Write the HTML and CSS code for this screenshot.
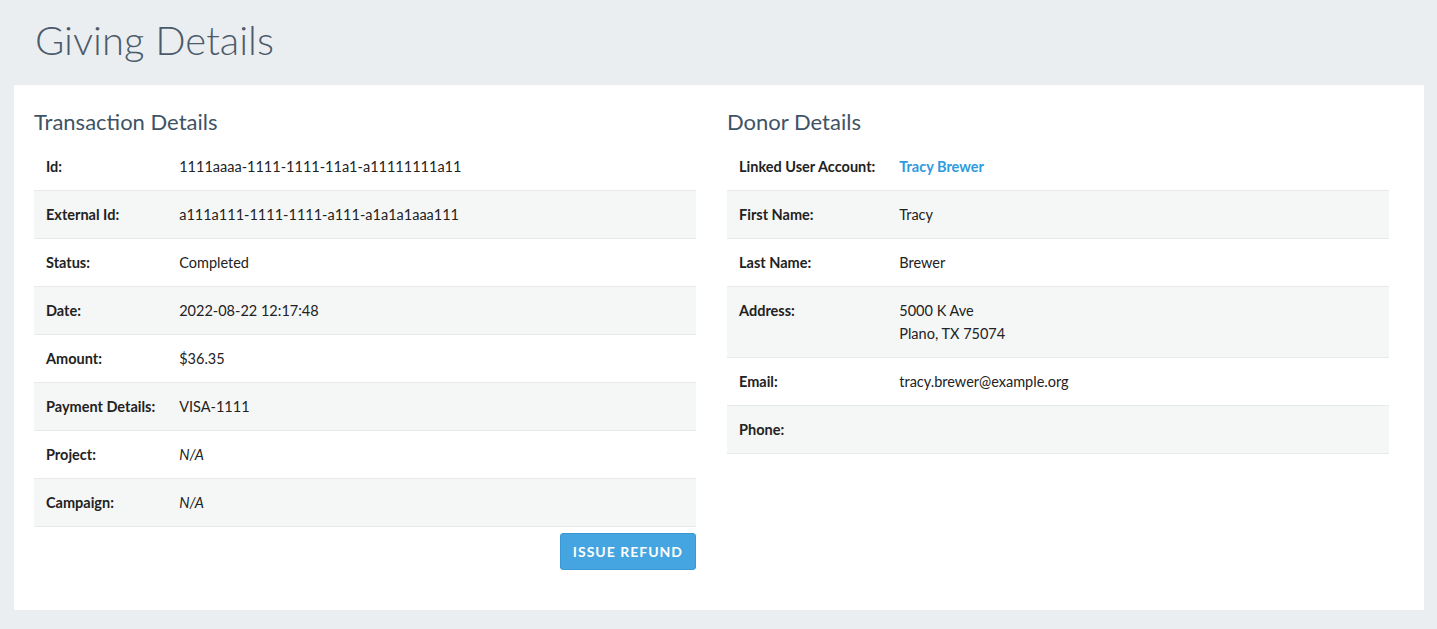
FILE: index.html
```html
<!DOCTYPE html>
<html lang="en">
<head>
    <meta charset="UTF-8">
    <meta name="viewport" content="width=device-width, initial-scale=1.0">
    <title>Giving Details</title>
    <link rel="stylesheet" href="styles.css">
</head>
<body>
<div class="page-header">
    <h1>Giving Details</h1>
</div>
<div class="panel">
    <div class="section">
        <h3>Transaction Details</h3>
        <table class="details">
            <tr><th>Id:</th><td>1111aaaa-1111-1111-11a1-a11111111a11</td></tr>
            <tr><th>External Id:</th><td>a111a111-1111-1111-a111-a1a1a1aaa111</td></tr>
            <tr><th>Status:</th><td>Completed</td></tr>
            <tr><th>Date:</th><td>2022-08-22 12:17:48</td></tr>
            <tr><th>Amount:</th><td>$36.35</td></tr>
            <tr><th>Payment Details:</th><td>VISA-1111</td></tr>
            <tr><th>Project:</th><td><i>N/A</i></td></tr>
            <tr><th>Campaign:</th><td><i>N/A</i></td></tr>
        </table>
        <div class="actions">
            <button class="btn">Issue Refund</button>
        </div>
    </div>
    <div class="section">
        <h3>Donor Details</h3>
        <table class="details">
            <tr><th>Linked User Account:</th><td><a href="#">Tracy Brewer</a></td></tr>
            <tr><th>First Name:</th><td>Tracy</td></tr>
            <tr><th>Last Name:</th><td>Brewer</td></tr>
            <tr><th>Address:</th><td>5000 K Ave<br>Plano, TX 75074</td></tr>
            <tr><th>Email:</th><td>tracy.brewer@example.org</td></tr>
            <tr><th>Phone:</th><td></td></tr>
        </table>
    </div>
</div>
</body>
</html>
```

FILE: styles.css
```css
body {
    margin: 0;
    padding: 0;
    background: #ebeef1;
    font-family: Lato, 'Open Sans', sans-serif;
    font-size: 14px;
    color: #222;
}
.page-header {
    padding: 18px 35px 23px;
}
.page-header h1 {
    margin: 0;
    font-size: 40px;
    font-weight: 300;
    line-height: 44px;
    color: #4b5b6b;
}
.panel {
    margin: 0 13px 19px 14px;
    background: white;
    padding: 20px 35px 40px 20px;
    display: grid;
    grid-template-columns: 1fr 1fr;
    gap: 31px;
    align-items: start;
}
.section h3 {
    margin: 0 0 3px;
    font-size: 22px;
    font-weight: 400;
    line-height: 34px;
    color: #3e5366;
}
.details {
    width: 100%;
    border-collapse: collapse;
    font-size: 14.5px;
}
.details tr {
    border-top: 1px solid #e7eaec;
}
.details tr:first-child {
    border-top-color: transparent;
}
.details tr:nth-child(even) {
    background: #f5f6f6;
}
.details tr:last-child {
    border-bottom: 1px solid #e7eaec;
}
.details th, .details td {
    padding: 12px 12px;
    line-height: 23px;
    text-align: left;
    vertical-align: top;
}
.details th {
    font-weight: 700;
    white-space: nowrap;
}
.details td {
    width: 100%;
}
.details a {
    color: #2d9be0;
    font-weight: 700;
    text-decoration: none;
}
.actions {
    display: flex;
    justify-content: flex-end;
    margin-top: 6px;
}
.btn {
    font-family: Lato, 'Open Sans', sans-serif;
    font-size: 14px;
    font-weight: 700;
    text-transform: uppercase;
    letter-spacing: 1px;
    color: white;
    background: #45a5e0;
    border: 1px solid #3a98d4;
    border-radius: 3px;
    padding: 0 12px;
    height: 37px;
    cursor: pointer;
}
```
